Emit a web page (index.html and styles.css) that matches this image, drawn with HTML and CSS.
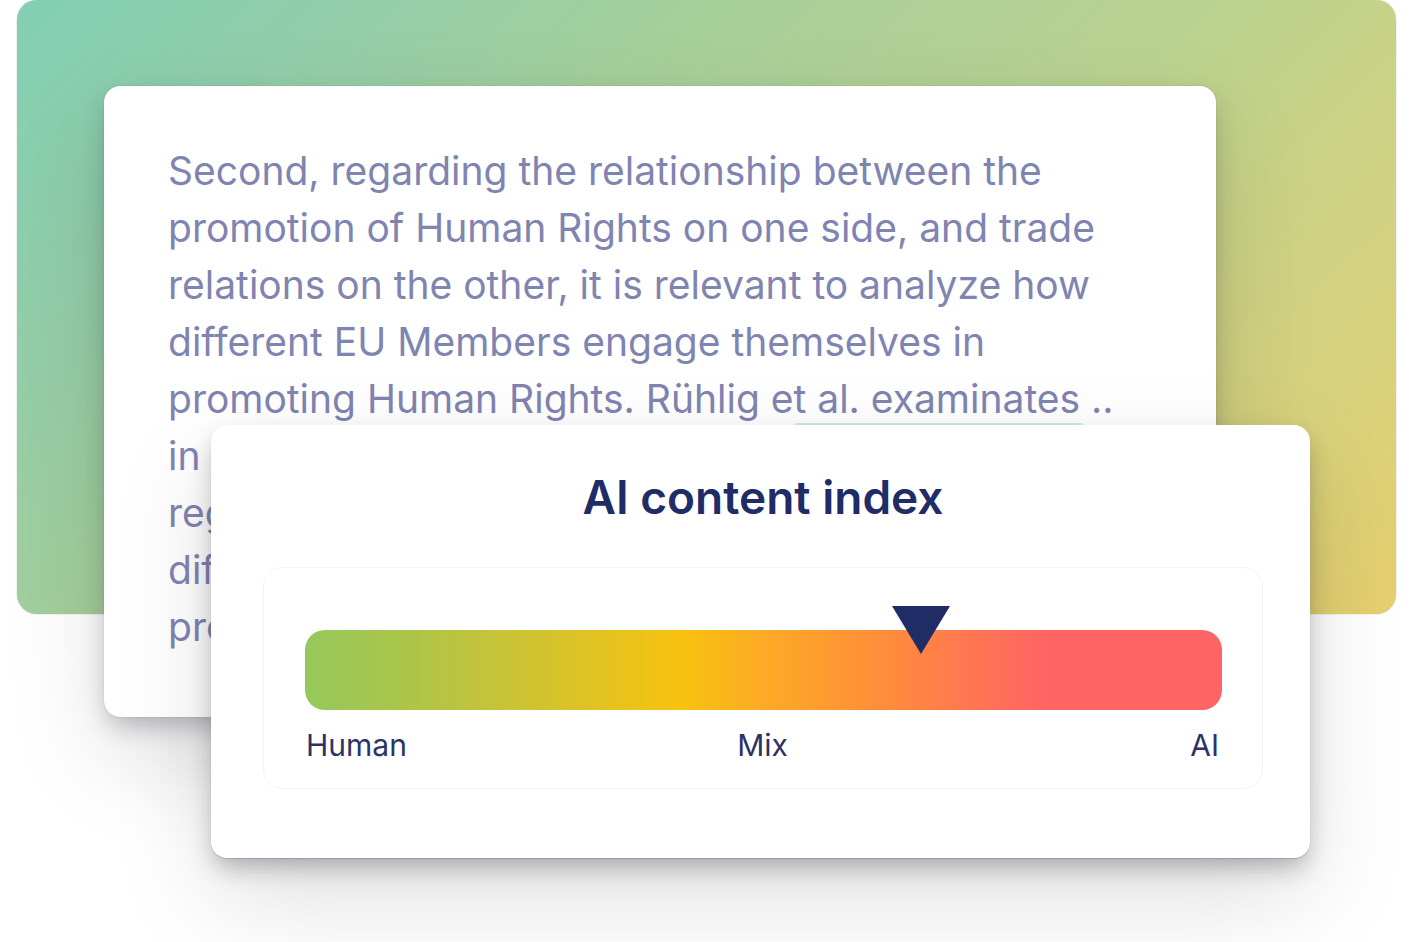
FILE: index.html
```html
<!DOCTYPE html>
<html lang="en">
<head>
<meta charset="utf-8">
<meta name="viewport" content="width=device-width, initial-scale=1">
<title>AI content index</title>
<link rel="stylesheet" href="styles.css">
</head>
<body>
<main class="stage">
  <div class="backdrop"></div>
  <article class="sheet">
    <p class="sheet-text">Second, regarding the relationship between the<br>promotion of Human Rights on one side, and trade<br>relations on the other, it is relevant to analyze how<br>different EU Members engage themselves in<br>promoting Human Rights. Rühlig et al. examinates ..<br>in<br>reg<br>dif<br>pro</p>
    <span class="highlight"></span>
  </article>
  <section class="card" aria-labelledby="card-title">
    <h1 class="card-title" id="card-title">AI content index</h1>
    <div class="gauge">
      <div class="gauge-bar">
        <svg class="gauge-marker" viewBox="0 0 58 48" aria-hidden="true"><path d="M0 0H58L29 48Z" fill="#202c66"/></svg>
      </div>
      <div class="gauge-labels">
        <span>Human</span>
        <span class="label-mid">Mix</span>
        <span class="label-end">AI</span>
      </div>
    </div>
  </section>
</main>
</body>
</html>
```
FILE: styles.css
```css
* {
  box-sizing: border-box;
}

body {
  margin: 0;
  background: #fff;
  font-family: Inter, "Liberation Sans", sans-serif;
  overflow-x: hidden;
}

.stage {
  display: grid;
  grid-template-columns: minmax(0, 1fr);
  padding: 0 17px;
  overflow: hidden;
}

.stage > * {
  grid-area: 1 / 1;
}

.backdrop {
  height: 614px;
  border-radius: 20px;
  background: linear-gradient(135deg, #82cfb4 0%, #93cea8 18%, #a6cf9a 35%, #bad290 60%, #c9d286 72%, #dad17a 88%, #e6cf6e 100%);
  box-shadow: 0 0 1px rgba(40, 44, 80, 0.6);
}

.sheet {
  position: relative;
  align-self: start;
  margin: 86px 180px 0 87px;
  padding: 56px 64px 62px;
  border-radius: 16px;
  background: #fff;
  box-shadow: 0 0 1px rgba(40, 44, 90, 0.4), 0 12px 24px -4px rgba(30, 32, 50, 0.28), 0 40px 100px rgba(0, 0, 0, 0.13);
}

.sheet-text {
  margin: 0;
  color: #8084b1;
  font-size: 39px;
  line-height: 57px;
  white-space: nowrap;
}

.highlight {
  position: absolute;
  top: 337px;
  left: 690px;
  width: 290px;
  height: 8px;
  border-radius: 4px;
  background: #c4f0e2;
}

.card {
  position: relative;
  margin: 425px 86px 84px 194px;
  padding: 44px 47px 69px 52px;
  border-radius: 16px;
  background: #fff;
  box-shadow: 0 1px 1px rgba(40, 44, 90, 0.2), 0 12px 24px -4px rgba(30, 32, 50, 0.32), 0 40px 100px rgba(0, 0, 0, 0.13);
}

.card-title {
  margin: 0 0 42px;
  color: #202c66;
  font-size: 46px;
  font-weight: 600;
  line-height: 56px;
  text-align: center;
}

.gauge {
  padding: 62px 40px 24px 41px;
  border: 1px solid #f3f3f5;
  border-radius: 20px;
}

.gauge-bar {
  position: relative;
  height: 80px;
  border-radius: 20px;
  background: linear-gradient(90deg, #95c85c 0%, #a9c54b 10%, #c9c336 22%, #f8c20f 41%, #fdaa25 50%, #ff8b3c 64%, #ff6e5a 76%, #ff6464 81%, #ff6464 100%);
}

.gauge-marker {
  position: absolute;
  top: -24px;
  left: 64%;
  width: 58px;
  height: 48px;
}

.gauge-labels {
  display: grid;
  grid-template-columns: 1fr auto 1fr;
  padding: 16px 3px 0 1px;
  color: #2c3266;
  font-size: 30px;
  line-height: 38px;
}

.label-end {
  text-align: right;
}
```
